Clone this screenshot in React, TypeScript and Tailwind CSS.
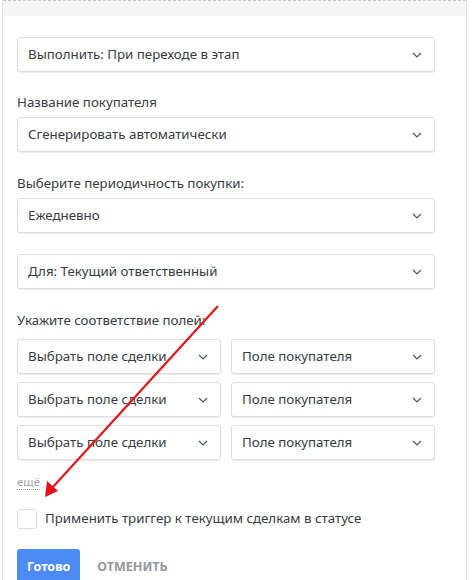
import { ReactNode } from "react";

function Chevron() {
  return (
    <svg width="10" height="6" viewBox="0 0 10 6" className="shrink-0">
      <path d="M1 1l4 4 4-4" fill="none" stroke="#4b5563" strokeWidth="1.2" />
    </svg>
  );
}

function Select({ children, className = "" }: { children: ReactNode; className?: string }) {
  return (
    <div
      className={
        "flex h-[35px] shrink-0 items-center justify-between rounded-[3px] border border-[#dcdde0] bg-white pl-[10px] pr-[12px] shadow-[0_1px_1px_rgba(0,0,0,0.08)] " +
        className
      }
    >
      <span className="truncate">{children}</span>
      <Chevron />
    </div>
  );
}

export default function App() {
  const rows = [1, 2, 3];

  return (
    <div
      className="relative h-[580px] w-[473px] overflow-hidden bg-white text-[13.3px] text-[#363b44]"
      style={{ fontFamily: '"Noto Sans", "Open Sans", sans-serif' }}
    >
      <div className="ml-[2px] h-full w-[465px] border-x border-[#e3e3e3]">
        <div className="h-[16px] border-t border-dashed border-[#c8c8c8] bg-[#f5f5f5]" />
        <div className="flex flex-col pl-[14px] pt-[21px]">
          <Select className="w-[418px]">Выполнить: При переходе в этап</Select>

          <div className="mt-[20px] mb-[5px] leading-[20px]">Название покупателя</div>
          <Select className="w-[418px]">Сгенерировать автоматически</Select>

          <div className="mt-[21px] mb-[5px] leading-[20px]">Выберите периодичность покупки:</div>
          <Select className="w-[418px]">Ежедневно</Select>

          <Select className="mt-[21px] w-[418px]">Для: Текущий ответственный</Select>

          <div className="mt-[21px] mb-[9px] leading-[20px]">Укажите соответствие полей:</div>
          <div className="flex w-[418px] flex-col gap-[8px]">
            {rows.map((r) => (
              <div key={r} className="flex gap-[10px]">
                <Select className="w-[204px]">Выбрать поле сделки</Select>
                <Select className="w-[204px]">Поле покупателя</Select>
              </div>
            ))}
          </div>

          <div className="mt-[14px] w-fit border-b border-dotted border-[#9aa0a6] text-[11.5px] leading-[15px] text-[#a1a5ab]">
            ещё
          </div>

          <label className="mt-[19px] flex items-center gap-[8px]">
            <span className="h-[20px] w-[20px] rounded-[3px] border border-[#dcdde0] bg-white" />
            <span className="text-[13.3px]">Применить триггер к текущим сделкам в статусе</span>
          </label>

          <div className="mt-[20px] flex items-center gap-[17px]">
            <button className="h-[36px] rounded-[3px] bg-[#4c8bf5] px-[10px] text-[12.5px] font-bold text-white">
              Готово
            </button>
            <span className="text-[12.5px] font-bold text-[#9197a0]">ОТМЕНИТЬ</span>
          </div>
        </div>
      </div>

      <svg className="pointer-events-none absolute left-0 top-0" width="473" height="580">
        <line x1="218" y1="306" x2="52" y2="488" stroke="#e0161b" strokeWidth="2.2" />
        <polygon points="45,497 47,481 58,491" fill="#e0161b" />
      </svg>
    </div>
  );
}
